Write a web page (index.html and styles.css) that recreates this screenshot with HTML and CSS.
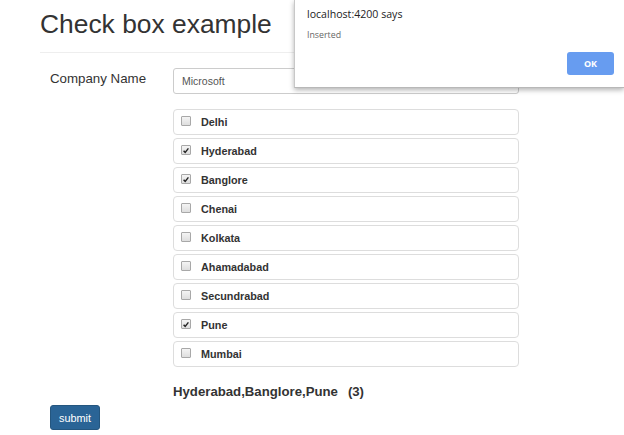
FILE: index.html
```html
<!DOCTYPE html>
<html>
<head>
<meta charset="utf-8">
<link rel="stylesheet" href="styles.css">
</head>
<body>
<div class="page">
  <h1 class="title">Check box example</h1>
  <div class="form-row">
    <label class="form-label">Company Name</label>
    <div class="field">Microsoft</div>
  </div>
  <ul class="options">
    <li class="option"><span class="box"></span><span class="opt-text">Delhi</span></li>
    <li class="option"><span class="box"><svg viewBox="0 0 10 10" width="10" height="10"><path d="M2 5.2 L4 7.4 L8 2.4" fill="none" stroke="#222" stroke-width="1.8"/></svg></span><span class="opt-text">Hyderabad</span></li>
    <li class="option"><span class="box"><svg viewBox="0 0 10 10" width="10" height="10"><path d="M2 5.2 L4 7.4 L8 2.4" fill="none" stroke="#222" stroke-width="1.8"/></svg></span><span class="opt-text">Banglore</span></li>
    <li class="option"><span class="box"></span><span class="opt-text">Chenai</span></li>
    <li class="option"><span class="box"></span><span class="opt-text">Kolkata</span></li>
    <li class="option"><span class="box"></span><span class="opt-text">Ahamadabad</span></li>
    <li class="option"><span class="box"></span><span class="opt-text">Secundrabad</span></li>
    <li class="option"><span class="box"><svg viewBox="0 0 10 10" width="10" height="10"><path d="M2 5.2 L4 7.4 L8 2.4" fill="none" stroke="#222" stroke-width="1.8"/></svg></span><span class="opt-text">Pune</span></li>
    <li class="option"><span class="box"></span><span class="opt-text">Mumbai</span></li>
  </ul>
  <div class="result">Hyderabad,Banglore,Pune<span class="count">(3)</span></div>
  <button class="submit">submit</button>
</div>
<div class="dialog">
  <div class="dlg-title">localhost:4200 says</div>
  <div class="dlg-msg">Inserted</div>
  <div class="dlg-actions"><button class="dlg-ok">OK</button></div>
</div>
</body>
</html>
```
FILE: styles.css
```css
html, body {
  margin: 0;
  padding: 0;
  background: #fff;
}
body {
  font-family: "Liberation Sans", Arial, sans-serif;
  color: #333;
  width: 624px;
  height: 435px;
  overflow: hidden;
  position: relative;
}
.page {
  padding: 9px 40px 0 40px;
}
.title {
  margin: 0;
  font-size: 26.4px;
  font-weight: normal;
  line-height: 30px;
  padding-bottom: 13px;
  border-bottom: 1px solid #eee;
  color: #333;
}
.form-row {
  display: flex;
  margin-top: 15px;
  padding-left: 10px;
}
.form-label {
  width: 123px;
  font-size: 13.3px;
  padding-top: 3px;
  line-height: 16px;
  color: #333;
}
.field {
  box-sizing: border-box;
  width: 346px;
  height: 26px;
  border: 1px solid #ccc;
  border-radius: 3px;
  font-size: 10.5px;
  color: #555;
  padding: 0 8px;
  line-height: 24px;
}
.options {
  list-style: none;
  margin: 15px 0 0 133px;
  padding: 0;
  width: 346px;
  display: flex;
  flex-direction: column;
  gap: 3px;
}
.option {
  box-sizing: border-box;
  height: 26px;
  border: 1px solid #ddd;
  border-radius: 4px;
  display: flex;
  align-items: center;
  padding-left: 7px;
}
.box {
  box-sizing: border-box;
  width: 10px;
  height: 10px;
  border: 1px solid #a8a8a8;
  border-radius: 1px;
  background: linear-gradient(#f4f4f4, #dedede);
  display: flex;
  align-items: center;
  justify-content: center;
  margin-top: -2px;
}
.box svg {
  display: block;
  width: 9px;
  height: 9px;
}
.opt-text {
  margin-left: 10px;
  font-size: 10.8px;
  font-weight: bold;
  color: #333;
}
.result {
  margin: 15px 0 0 133px;
  font-size: 13.2px;
  font-weight: bold;
  line-height: 20px;
  color: #333;
}
.count {
  margin-left: 10px;
}
.submit {
  display: block;
  margin: 3px 0 0 10px;
  width: 50px;
  height: 25px;
  padding: 0;
  border: 1px solid #24567f;
  border-radius: 3px;
  background: #2a6496;
  color: #fff;
  font-family: "Liberation Sans", Arial, sans-serif;
  font-size: 10.9px;
}
.dialog {
  position: absolute;
  top: 0;
  left: 294px;
  right: 0;
  height: 88px;
  box-sizing: border-box;
  background: #fff;
  border-left: 1px solid #c8c8c8;
  border-bottom: 1px solid #b8b8b8;
  box-shadow: 0 2px 5px rgba(0, 0, 0, 0.3);
  padding: 6px 10px 0 12px;
  font-family: "Open Sans", "Noto Sans", sans-serif;
}
.dlg-title {
  font-size: 10.6px;
  line-height: 16px;
  color: #222;
}
.dlg-msg {
  margin-top: 7px;
  font-size: 8.8px;
  line-height: 12px;
  color: #666;
}
.dlg-actions {
  display: flex;
  justify-content: flex-end;
  margin-top: 11px;
}
.dlg-ok {
  width: 47px;
  height: 23px;
  border: none;
  border-radius: 3px;
  background: #679cf0;
  color: #fff;
  font-family: "Open Sans", "Noto Sans", sans-serif;
  font-weight: bold;
  font-size: 9px;
  padding: 0;
}
```
